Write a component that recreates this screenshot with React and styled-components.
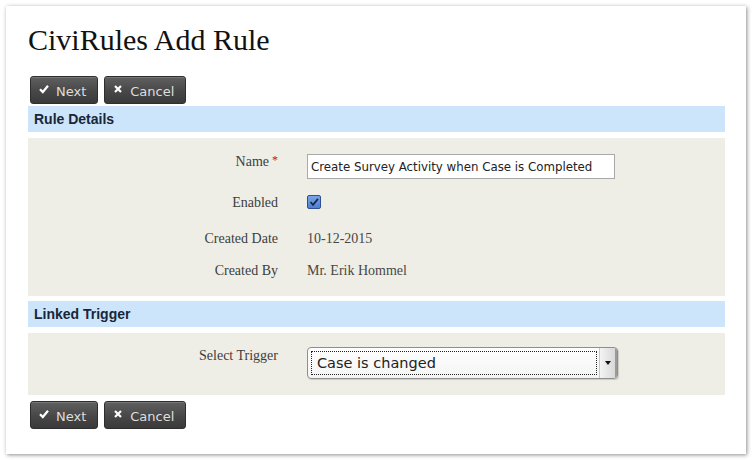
import React from "react";
import styled, { createGlobalStyle } from "styled-components";

const Global = createGlobalStyle`
  html, body { margin: 0; padding: 0; background: #ffffff; }
  body { width: 752px; height: 460px; overflow: hidden; }
`;

const Panel = styled.div`
  box-sizing: border-box;
  margin: 6px 0 0 6px;
  width: 740px;
  height: 448px;
  background: #fff;
  box-shadow: 1px 1px 4px rgba(0, 0, 0, 0.45);
  padding: 16px 21px 0 22px;
`;

const Title = styled.h1`
  margin: 0;
  font-family: "Liberation Serif", "DejaVu Serif", serif;
  font-weight: normal;
  font-size: 30px;
  line-height: 36px;
  color: #111;
`;

const ButtonRow = styled.div`
  display: flex;
  gap: 6px;
  margin: ${(p) => p.$margin};
  padding-left: 2px;
`;

const Button = styled.button`
  box-sizing: border-box;
  height: 28px;
  padding: 0 11px 0 8px;
  display: flex;
  align-items: flex-start;
  gap: 7px;
  border: 1px solid #2e2e2e;
  border-radius: 3px;
  background: linear-gradient(#606060, #474747 55%, #3a3a3a);
  box-shadow: inset 0 1px 0 rgba(255, 255, 255, 0.15);
  color: #dedede;
  font-family: "DejaVu Sans", Verdana, sans-serif;
  font-size: 13px;
  cursor: pointer;
`;

const BtnIcon = styled.span`
  display: block;
  margin-top: 5px;
  width: 10px;
  height: 10px;
`;

const BtnLabel = styled.span`
  display: block;
  margin-top: 8px;
  line-height: 14px;
`;

const SectionHeader = styled.div`
  box-sizing: border-box;
  height: 26px;
  background: #cce5fb;
  padding: 0 6px;
  display: flex;
  align-items: center;
  font-family: "Liberation Sans", Arial, sans-serif;
  font-weight: bold;
  font-size: 14px;
  color: #1a2638;
`;

const SectionBody = styled.div`
  margin-top: 6px;
  margin-bottom: ${(p) => p.$mb || 0}px;
  background: #efeee6;
  padding: ${(p) => p.$padding};
  display: flex;
  flex-direction: column;
`;

const Row = styled.div`
  display: grid;
  grid-template-columns: 250px 1fr;
  column-gap: 29px;
  align-items: start;
  height: ${(p) => p.$h}px;
`;

const Label = styled.div`
  text-align: right;
  font-family: "Liberation Serif", "DejaVu Serif", serif;
  font-size: 14px;
  color: #3d3d3d;
  margin-top: ${(p) => p.$pt || 0}px;
  line-height: 16px;
`;

const Required = styled.span`
  color: #b22222;
  margin-left: 3px;
  font-size: 12px;
  vertical-align: 2px;
`;

const Value = styled.div`
  font-family: "Liberation Serif", "DejaVu Serif", serif;
  font-size: 14px;
  color: #474747;
  line-height: 16px;
  margin-top: ${(p) => p.$pt || 0}px;
`;

const TextInput = styled.div`
  box-sizing: border-box;
  width: 308px;
  height: 25px;
  border: 1px solid #a9a9a9;
  background: #fff;
  padding: 0 3px;
  display: flex;
  align-items: center;
  font-family: "DejaVu Sans", Verdana, sans-serif;
  font-size: 11.8px;
  color: #222;
  white-space: nowrap;
`;

const Checkbox = styled.span`
  display: block;
  box-sizing: border-box;
  width: 14px;
  height: 14px;
  margin-top: 3px;
  border: 1px solid #2f4f8f;
  border-radius: 2px;
  background: linear-gradient(#7aa4e6, #4d7fd1);
  position: relative;
`;

const CheckMark = styled.svg`
  position: absolute;
  left: 0;
  top: 0;
`;

const Select = styled.div`
  box-sizing: border-box;
  width: 311px;
  height: 32px;
  border: 1px solid #8e8e8e;
  border-radius: 4px;
  background: linear-gradient(#ffffff, #f4f4f4);
  display: flex;
  overflow: hidden;
  box-shadow: 1px 1px 1px rgba(0, 0, 0, 0.15);
`;

const SelectText = styled.div`
  flex: 1;
  margin: 3px 2px 3px 3px;
  border: 1px dotted #222;
  display: flex;
  align-items: center;
  padding-left: 5px;
  font-family: "DejaVu Sans", Verdana, sans-serif;
  font-size: 14.5px;
  color: #222;
`;

const SelectArrow = styled.div`
  width: 15px;
  border-left: 1px solid #c8c8c8;
  background: linear-gradient(90deg, #f4f4f4, #d8d8d8);
  border-right: 2px solid #9a9a9a;
  display: flex;
  align-items: center;
  justify-content: center;
`;

const CheckIcon = () => (
  <svg width="10" height="10" viewBox="0 0 10 10">
    <path d="M1 5.2 L3.8 8 L9 1.8" fill="none" stroke="#fff" strokeWidth="2.2" />
  </svg>
);

const CrossIcon = () => (
  <svg width="10" height="10" viewBox="0 0 10 10">
    <path d="M2 2 L8 8 M8 2 L2 8" fill="none" stroke="#fff" strokeWidth="2.2" />
  </svg>
);

const Buttons = ({ margin }) => (
  <ButtonRow $margin={margin}>
    <Button>
      <BtnIcon><CheckIcon /></BtnIcon>
      <BtnLabel>Next</BtnLabel>
    </Button>
    <Button>
      <BtnIcon><CrossIcon /></BtnIcon>
      <BtnLabel>Cancel</BtnLabel>
    </Button>
  </ButtonRow>
);

export default function App() {
  return (
    <>
      <Global />
      <Panel>
        <Title>CiviRules Add Rule</Title>
        <Buttons margin="18px 0 2px 0" />
        <SectionHeader>Rule Details</SectionHeader>
        <SectionBody $padding="16px 0 11px 0" $mb={5}>
          <Row $h={38}>
            <Label $pt={-2}>
              Name<Required>*</Required>
            </Label>
            <TextInput>Create Survey Activity when Case is Completed</TextInput>
          </Row>
          <Row $h={35}>
            <Label $pt={3}>Enabled</Label>
            <Checkbox>
              <CheckMark width="12" height="12" viewBox="0 0 12 12">
                <path d="M2.5 6 L5 8.8 L10 2.8" fill="none" stroke="#1b2a44" strokeWidth="1.8" />
              </CheckMark>
            </Checkbox>
          </Row>
          <Row $h={32}>
            <Label $pt={4}>Created Date</Label>
            <Value $pt={4}>10-12-2015</Value>
          </Row>
          <Row $h={26}>
            <Label $pt={4}>Created By</Label>
            <Value $pt={4}>Mr. Erik Hommel</Value>
          </Row>
        </SectionBody>
        <SectionHeader>Linked Trigger</SectionHeader>
        <SectionBody $padding="14px 0 16px 0">
          <Row $h={32}>
            <Label $pt={1}>Select Trigger</Label>
            <Select>
              <SelectText>Case is changed</SelectText>
              <SelectArrow>
                <svg width="6" height="4" viewBox="0 0 6 4">
                  <path d="M0 0 H6 L3 4 Z" fill="#111" />
                </svg>
              </SelectArrow>
            </Select>
          </Row>
        </SectionBody>
        <Buttons margin="6px 0 0 0" />
      </Panel>
    </>
  );
}
